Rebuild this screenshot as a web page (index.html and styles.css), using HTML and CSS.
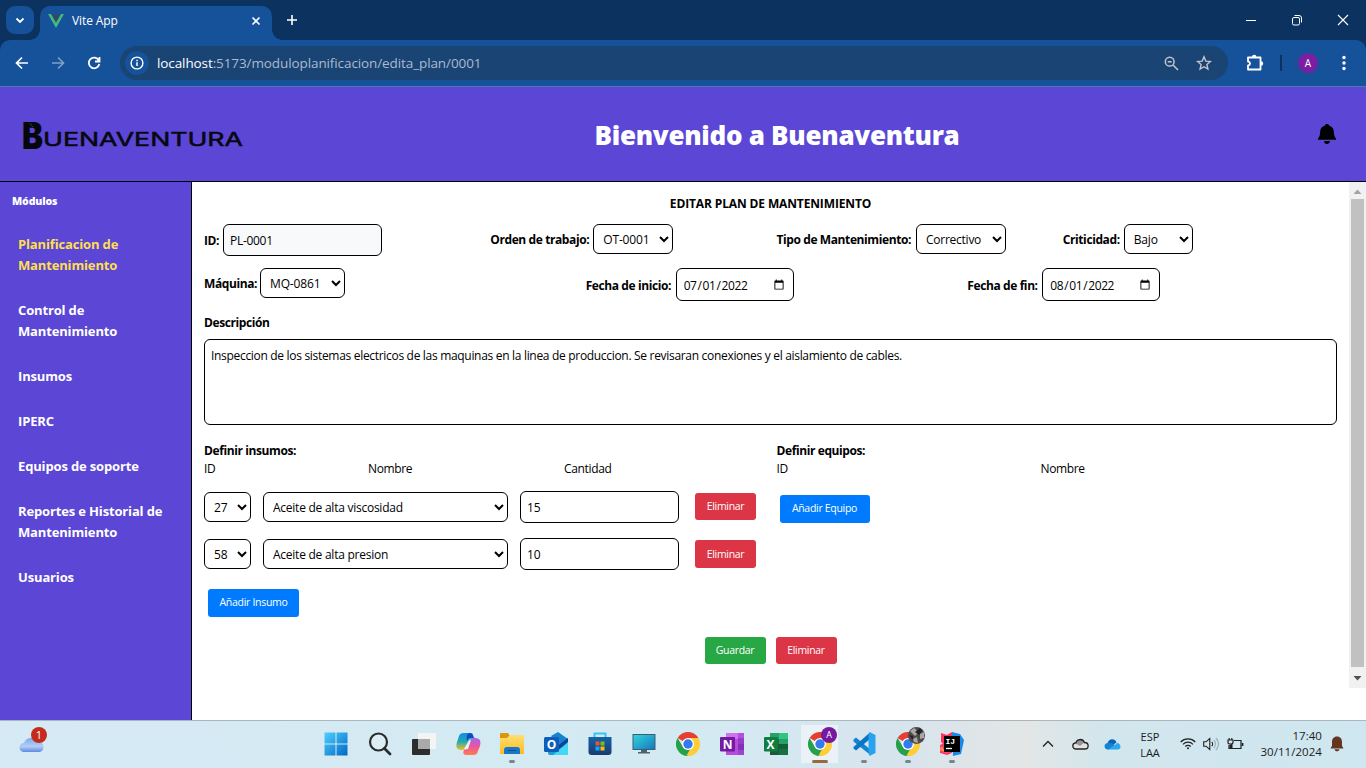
FILE: index.html
```html
<!DOCTYPE html>
<html lang="es">
<head>
<meta charset="utf-8">
<title>Vite App</title>
<link rel="stylesheet" href="styles.css">
</head>
<body>
<div class="screen">
  <div class="tabstrip">
    <div class="tab-search"><svg width="10" height="7" viewBox="0 0 10 7"><path d="M1.5 1.5 5 5l3.500-3.500" fill="none" stroke="#fff" stroke-width="1.800"/></svg></div>
    <div class="tab">
      <svg width="16" height="14" viewBox="0 0 16 14"><path d="M0 0h3.200L8 8.300 12.800 0H16L8 14z" fill="#41b883"/><path d="M3.200 0h3L8 3.200 9.800 0h3L8 8.400z" fill="#35495e"/></svg>
      <span class="tab-title">Vite App</span>
      <svg width="10" height="10" viewBox="0 0 10 10"><path d="m1.500 1.500 7 7m0-7-7 7" stroke="#fff" stroke-width="1.600"/></svg>
    </div>
    <svg class="plus" width="12" height="12" viewBox="0 0 12 12"><path d="M6 1v10M1 6h10" stroke="#fff" stroke-width="1.600"/></svg>
    <div class="window-buttons">
      <svg width="12" height="12" viewBox="0 0 12 12"><path d="M1 6.500h10" stroke="#fff"/></svg>
      <svg width="12" height="12" viewBox="0 0 12 12" fill="none" stroke="#fff"><rect x="1.500" y="3.500" width="7" height="7.500" rx="1.500"/><path d="M3.500 1.500H8a2.500 2.500 0 0 1 2.500 2.500v4.500"/></svg>
      <svg width="12" height="12" viewBox="0 0 12 12"><path d="m1 1 10 10M11 1 1 11" stroke="#fff" stroke-width="1.100"/></svg>
    </div>
  </div>
  <div class="toolbar-back"><div class="toolbar">
    <div class="nav-buttons">
      <svg width="14" height="14" viewBox="0 0 14 14" fill="none" stroke="#fff" stroke-width="1.700"><path d="M13 7H2M7 1.500 1.500 7 7 12.500"/></svg>
      <svg width="14" height="14" viewBox="0 0 14 14" fill="none" stroke="#7f9fc5" stroke-width="1.700"><path d="M1 7h11M7 1.500 12.500 7 7 12.500"/></svg>
      <svg width="14" height="14" viewBox="0 0 14 14" fill="none" stroke="#fff" stroke-width="1.800"><path d="M11.800 4.500A5.300 5.300 0 1 0 12.300 8M12.500 1v4.500H8"/></svg>
    </div>
    <div class="address">
      <div class="info"><svg width="14" height="14" viewBox="0 0 14 14"><circle cx="7" cy="7" r="5.900" fill="none" stroke="#fff" stroke-width="1.400"/><path d="M7 6.200V10M7 3.800v1.400" stroke="#fff" stroke-width="1.500"/></svg></div>
      <div class="url"><b>localhost</b>:5173/moduloplanificacion/edita_plan/0001</div>
      <svg width="15" height="15" viewBox="0 0 15 15" fill="none" stroke="#c3c5c9" stroke-width="1.500"><circle cx="5.700" cy="5.700" r="4.400"/><path d="m9 9 5 5M3.700 5.700h4"/></svg>
      <svg class="star" width="16" height="16" viewBox="0 0 16 16" fill="none" stroke="#c3c5c9" stroke-width="1.400"><path d="m8 1.800 1.800 4.300 4.600.4-3.500 3 1 4.600L8 11.700l-3.900 2.400 1-4.600-3.500-3 4.600-.4z"/></svg>
    </div>
    <svg class="ext" width="18" height="18" viewBox="0 0 18 18" fill="none" stroke="#fff" stroke-width="1.800"><path d="M2 3.500h12.500v12H2v-4a2 2 0 0 0 0-4z" stroke-linejoin="round"/><path d="M6 3a2.200 2.200 0 0 1 4.400 0zM15 7.300a2.200 2.200 0 0 1 0 4.400z" fill="#fff" stroke="none"/></svg>
    <i class="tool-sep"></i>
    <div class="avatar">A</div>
    <svg class="dots" width="4" height="16" viewBox="0 0 4 16" fill="#fff"><circle cx="2" cy="2.500" r="1.700"/><circle cx="2" cy="8" r="1.700"/><circle cx="2" cy="13.500" r="1.700"/></svg>
  </div></div>

  <header class="header">
    <svg class="brand" width="224" height="54" viewBox="0 0 224 54">
      <text class="brand-initial" x="0" y="41.500" textLength="21" lengthAdjust="spacingAndGlyphs">B</text>
      <path d="m7.500 16 3.500 4" fill="none" stroke="#2f5f66" stroke-width=".7"/>
      <text class="brand-rest" x="21" y="39" textLength="200" lengthAdjust="spacingAndGlyphs">UENAVENTURA</text>
    </svg>
    <h1>Bienvenido a Buenaventura</h1>
    <svg class="bell" width="18" height="20" viewBox="0 0 18 20"><path d="M9 0c1.200 0 1.800.6 2 1.400 3 .8 4.800 3.200 4.800 6.100 0 3.500.8 5.500 2.200 7v1.300H0v-1.300c1.400-1.500 2.200-3.500 2.200-7C2.200 4.600 4 2.200 7 1.400 7.200.6 7.800 0 9 0zM6 17h6c0 4-6 4-6 0z"/></svg>
  </header>

  <div class="body">
    <nav class="sidebar">
      <div class="side-title">Módulos</div>
      <a class="active">Planificacion de<br>Mantenimiento</a>
      <a>Control de<br>Mantenimiento</a>
      <a>Insumos</a>
      <a>IPERC</a>
      <a>Equipos de soporte</a>
      <a>Reportes e Historial de<br>Mantenimiento</a>
      <a>Usuarios</a>
    </nav>
    <main class="content">
      <h2>EDITAR PLAN DE MANTENIMIENTO</h2>
      <div class="row four">
        <div class="field"><label class="l-id">ID:</label><input class="readonly" value="PL-0001" readonly></div>
        <div class="field"><label class="l-order">Orden de trabajo:</label><select class="s-order"><option>OT-0001</option></select></div>
        <div class="field"><label class="l-type">Tipo de Mantenimiento:</label><select class="s-type"><option>Correctivo</option></select></div>
        <div class="field"><label class="l-crit">Criticidad:</label><select class="s-crit"><option>Bajo</option></select></div>
      </div>
      <div class="row three">
        <div class="field"><label class="l-machine">Máquina:</label><select class="s-machine"><option>MQ-0861</option></select></div>
        <div class="field"><label class="l-start">Fecha de inicio:</label><input type="date" value="2022-07-01"></div>
        <div class="field"><label class="l-end">Fecha de fin:</label><input type="date" value="2022-08-01"></div>
      </div>
      <label class="desc-label">Descripción</label>
      <textarea>Inspeccion de los sistemas electricos de las maquinas en la linea de produccion. Se revisaran conexiones y el aislamiento de cables.</textarea>
      <div class="halves">
        <section>
          <b class="sec-title">Definir insumos:</b>
          <div class="heads supplies"><span>ID</span><span>Nombre</span><span>Cantidad</span></div>
          <div class="item"><select class="s-num"><option>27</option></select><select class="s-name"><option>Aceite de alta viscosidad</option></select><input value="15"><button class="btn danger">Eliminar</button></div>
          <div class="item"><select class="s-num"><option>58</option></select><select class="s-name"><option>Aceite de alta presion</option></select><input value="10"><button class="btn danger tall">Eliminar</button></div>
          <button class="btn primary add-supply">Añadir Insumo</button>
        </section>
        <section>
          <b class="sec-title">Definir equipos:</b>
          <div class="heads gear"><span>ID</span><span>Nombre</span></div>
          <button class="btn primary add-gear">Añadir Equipo</button>
        </section>
      </div>
      <div class="actions"><button class="btn success">Guardar</button><button class="btn danger">Eliminar</button></div>
    </main>
    <div class="scrollbar">
      <svg width="9" height="5" viewBox="0 0 9 5"><path d="M.5 5 4.500.5l4 4.500z" fill="#a3a3a3"/></svg>
      <i class="thumb"></i>
      <svg width="9" height="5" viewBox="0 0 9 5"><path d="M.5 0h8l-4 4.500z" fill="#505050"/></svg>
    </div>
  </div>

  <footer class="taskbar">
    <div class="weather"><svg width="26" height="20" viewBox="0 0 26 20"><defs><linearGradient id="wc" x2="0" y2="1"><stop offset="0" stop-color="#7fabea"/><stop offset=".6" stop-color="#b2cdf8"/><stop offset="1" stop-color="#5b8be0"/></linearGradient></defs><path d="M5 18a4.500 4.500 0 0 1 0-9C7 3 15 2 17.500 8c4-1 7 1.500 7 4.900 0 3-2 5.100-5 5.100z" fill="url(#wc)"/></svg><span class="badge">1</span></div>
    <div class="apps">
      <div class="app"><svg width="24" height="24" viewBox="0 0 24 24"><defs><linearGradient id="win" x2="1" y2="1"><stop stop-color="#4fd0ff"/><stop offset="1" stop-color="#0067c5"/></linearGradient></defs><path d="M.5.5h11v11H.5zm12 0h11v11h-11zm-12 12h11v11H.5zm12 0h11v11h-11z" fill="url(#win)"/></svg></div>
      <div class="app"><svg width="24" height="24" viewBox="0 0 24 24" fill="none" stroke="#2b2b2b"><circle cx="10.500" cy="10" r="8.500" stroke-width="2.200" fill="#dceef3"/><path d="m16.500 16.500 5.500 5.500" stroke-width="2.800" stroke-linecap="round"/></svg></div>
      <div class="app"><svg width="26" height="24" viewBox="0 0 26 24"><rect x="7" y="1" width="18" height="16" rx="1" fill="#f4f4f4"/><rect x="1" y="7" width="18" height="16" rx="1" fill="#2d2d2c"/><path d="M7 7h12v10H7z" fill="#aaa"/></svg></div>
      <div class="app"><svg width="26" height="24" viewBox="0 0 26 24"><defs><linearGradient id="c1" x2="0" y2="1"><stop stop-color="#1689e8"/><stop offset=".5" stop-color="#20aab0"/><stop offset="1" stop-color="#f5bf22"/></linearGradient><linearGradient id="c2" x2="0" y2="1"><stop stop-color="#9b68f0"/><stop offset=".5" stop-color="#ed559b"/><stop offset="1" stop-color="#ff7c4d"/></linearGradient></defs><path d="M9 1h7c2 0 3 3 2 5l-4 2-3 7c-1 3-2 3-5 3C1 18 1 14 2 10L4 4c.8-2 2-3 5-3z" fill="url(#c1)"/><path d="M15 1c3 0 3 5 5 5h-6l-2 3c-1-4 0-8 3-8z" fill="#1648bd"/><path d="M18 23h-7c-3 0-3-3-2-5l3-1 3-8c1-3 2-3 5-3 6 0 6 4 5 8l-2 5c-.8 3-2 4-5 4z" fill="url(#c2)"/><path d="m13 10 3-2-3 9H9z" fill="#e4f4f8"/></svg></div>
      <div class="app"><svg width="26" height="24" viewBox="0 0 26 24"><defs><linearGradient id="fd" x2="0" y2="1"><stop stop-color="#ffdf70"/><stop offset="1" stop-color="#f9bd27"/></linearGradient></defs><path d="M1 2q0-1 1-1h7l2 3v5H1z" fill="#dc9606"/><path d="M1 6h7l3-3h13q1 0 1 1v18H1z" fill="url(#fd)"/><path d="M5 22v-4q0-3 3-3h10q3 0 3 3v4z" fill="#1976c6"/><path d="M9 18.500h8" stroke="#095094"/></svg><i class="run"></i></div>
      <div class="app"><svg width="26" height="24" viewBox="0 0 26 24"><path d="m5 8 10-7 10 7v13q0 2-2 2H7q-2 0-2-2z" fill="#1a9eda"/><path d="m8 4 7-4 10 7v5l-8 4z" fill="#1683d2"/><path d="m13 15 12-9v5L15 18z" fill="#0d4294"/><path d="m25 10-15 13h13q2 0 2-2z" fill="#43d8f5"/><rect x="1" y="5" width="15" height="15" rx="1.500" fill="#0d5eb9"/><text x="3.800" y="17" class="glyph">O</text></svg></div>
      <div class="app"><svg width="24" height="24" viewBox="0 0 24 24"><defs><linearGradient id="st" x2="0" y2="1"><stop stop-color="#1364aa"/><stop offset="1" stop-color="#193b70"/></linearGradient></defs><path d="M6.500 6V1.500h11V6" fill="none" stroke="#35c4f5" stroke-width="2"/><path d="M.5 5h23v15q0 3-3 3h-17q-3 0-3-3z" fill="url(#st)"/><path d="M7.500 9.500h4v4h-4z" fill="#f15229"/><path d="M12.500 9.500h4v4h-4z" fill="#81bd17"/><path d="M7.500 14.500h4v4h-4z" fill="#12a6ee"/><path d="M12.500 14.500h4v4h-4z" fill="#ffba08"/></svg></div>
      <div class="app"><svg width="26" height="24" viewBox="0 0 26 24"><defs><linearGradient id="pc" x2="1" y2="1"><stop stop-color="#32d5df"/><stop offset="1" stop-color="#1478bd"/></linearGradient></defs><rect x="2" y="2.500" width="22" height="15" fill="url(#pc)" stroke="#385e70"/><path d="M10 18h6v2h3v1.500H7V20h3z" fill="#536069"/></svg></div>
      <div class="app"><svg width="24" height="24" viewBox="0 0 24 24"><g id="chrome"><path d="M12 12 1.600 6A12 12 0 0 1 22.400 6z" fill="#e63e30"/><path d="M12 12V6h10.400A12 12 0 0 1 12 24z" fill="#ffcd35"/><path d="M12 24A12 12 0 0 1 1.600 6L7 15l5 3 5-3z" fill="#27a04b"/><path d="M17 15 12 24" stroke="#ffcd35" stroke-width="3"/><circle cx="12" cy="12" r="6" fill="#fff"/><circle cx="12" cy="12" r="4.700" fill="#337cf0"/></g></svg></div>
      <div class="app"><svg width="26" height="24" viewBox="0 0 26 24"><path d="M7 1h18v22H7z" fill="#b64ce0"/><path d="M7 1h12v6H7z" fill="#cf72ee"/><path d="M19 6h6v6h-6z" fill="#983bc9"/><path d="M19 12h6v6h-6z" fill="#8431b5"/><path d="M19 18h6v5h-6z" fill="#9d45cf"/><rect x="1" y="5" width="15" height="14.500" rx="1" fill="#7519a3"/><text x="3.700" y="16.500" class="glyph">N</text></svg></div>
      <div class="app"><svg width="26" height="24" viewBox="0 0 26 24"><path d="M7 1h9v6H7z" fill="#25a366"/><path d="M16 1h9v6h-9z" fill="#33c481"/><path d="M7 7h9v5H7zM16 17h9v6h-9z" fill="#147245"/><path d="M16 7h9v5h-9z" fill="#21a366"/><path d="M16 12h9v5h-9zM7 12h9v11H7z" fill="#185c38"/><rect x="1" y="5" width="14" height="14.500" rx="1" fill="#107c41"/><text x="3.600" y="16.500" class="glyph">X</text></svg></div>
      <div class="app current"><svg width="24" height="24" viewBox="0 0 24 24"><use href="#chrome"/></svg><span class="app-avatar">A</span><i class="run on"></i></div>
      <div class="app"><svg width="24" height="24" viewBox="0 0 24 24"><path d="m1.500 7.500 2.500-2L19 18v5.500L1.500 9.500z" fill="#1484d0"/><path d="M1.500 15 18 .5V7L4 18.500l-2.500-2z" fill="#0875c5"/><path d="m17.500 0 6 3v18l-6 3-1-4V4z" fill="#29a3ed"/></svg><i class="run"></i></div>
      <div class="app"><svg width="24" height="24" viewBox="0 0 24 24"><use href="#chrome"/></svg><span class="app-photo"><svg width="17" height="17" viewBox="0 0 17 17"><circle cx="8.500" cy="8.500" r="8.500" fill="#4c4b4b"/><path d="m2 4 4-3 5 4-4 4zM12 7l4-2v6l-4 1zM5 12l4-2 1 6-4-1z" fill="#a9a6a3"/><path d="m7 5 5-4 2 3-3 4zM1 8l4 1v4z" fill="#222"/></svg></span><i class="run"></i></div>
      <div class="app"><svg width="26" height="26" viewBox="0 0 26 26"><path d="m2 2 6 2 5-3 3 5-5 12-9-7z" fill="#ff335d"/><path d="m13 1 8 2 4 6-3 14-8 2z" fill="#168bed"/><path d="m1 14 8-4 4 12-5 2-7-2z" fill="#fc386d"/><path d="m2 15-1 4 7 3z" fill="#fc9536"/><path d="M5 5h16v16H5z"/><text x="6.500" y="13" class="ij">IJ</text><path d="M7 17.500h6" stroke="#fff" stroke-width="1.300"/></svg><i class="run"></i></div>
    </div>
    <div class="tray">
      <svg class="t-chev" width="12" height="8" viewBox="0 0 12 8"><path d="m1 6.500 5-5 5 5" fill="none" stroke="#222" stroke-width="1.300"/></svg>
      <svg class="t-cloud" width="17" height="12" viewBox="0 0 17 12"><path d="M4 11a3 3 0 0 1-.2-6.200C5 1 10.500 0 12.500 4.500 17.500 4.500 17 11 13 11z" fill="#e2e2e0"/><path d="M3.500 5.500C5 1 10.500 0 12.500 4.500L8 8z" fill="#969696"/><path d="M4 11a3 3 0 0 1-.2-6.200C5 1 10.500 0 12.500 4.500 17.500 4.500 17 11 13 11z" fill="none" stroke="#222" stroke-width="1.300"/></svg>
      <svg class="t-drive" width="17" height="12" viewBox="0 0 17 12"><path d="M3.500 5C5 0 11 0 12.500 4.500L6 9z" fill="#0b62b5"/><path d="M3.700 11.500C-.5 11.500-.5 5 4 5c3-1 5 1 7 2l-6 4.500z" fill="#1482d5"/><path d="M4 11.500 11 7l2-2c4 0 5 6.500.7 6.500z" fill="#29a8ec"/></svg>
      <div class="lang">ESP<br>LAA</div>
      <svg class="t-wifi" width="16" height="13" viewBox="0 0 16 13" fill="none" stroke="#222" stroke-width="1.200"><path d="M.7 5a10.300 10.300 0 0 1 14.600 0M3 7.300a7 7 0 0 1 10 0M5.300 9.500a3.800 3.800 0 0 1 5.400 0"/><circle cx="8" cy="11.300" r="1" fill="#222" stroke="none"/></svg>
      <svg class="t-vol" width="16" height="14" viewBox="0 0 16 14" fill="none" stroke="#222" stroke-width="1.100"><path d="M.7 4.800H3L6.800 1.500v11L3 9.200H.7zM8.700 4.800a3 3 0 0 1 0 4.400"/><path d="M10.800 3a5.500 5.500 0 0 1 0 8M12.800 1a8 8 0 0 1 0 12" stroke="#9caeb3"/></svg>
      <svg class="t-bat" width="17" height="14" viewBox="0 0 17 14" fill="none" stroke="#222" stroke-width="1.200"><path d="M7 3.500h7v8H2V8"/><path d="M15.500 6v3" stroke-width="1.800"/><path d="M1 3h5v2.500q0 1.500-2.500 1.500T1 5.500zM2.200 3V1M4.800 3V1"/><path d="M2.500 11V8l3-1.500V11z" fill="#222" stroke="none"/></svg>
      <div class="clock">17:40<br>30/11/2024</div>
      <svg class="t-bell" width="14" height="16" viewBox="0 0 14 16"><path d="M7 .5c3.200 0 5 2.300 5 5.300v4l1.500 2.700H.5L2 9.800v-4C2 2.800 3.800.5 7 .5zM4.500 13.200h5c-.4 2.700-4.600 2.700-5 0z" fill="#633620"/></svg>
    </div>
  </footer>
</div>
</body>
</html>
```
FILE: styles.css
```css
* { box-sizing: border-box; }
body { margin: 0; font-family: "Open Sans", "Noto Sans", sans-serif; font-size: 12px; color: #000; }
svg { display: block; flex: none; }
.screen { width: 1366px; height: 768px; display: flex; flex-direction: column; overflow: hidden; background: #fff; }

.tabstrip { height: 40px; flex: none; background: #0c335f; display: flex; align-items: center; padding-left: 6px; }
.tab-search { width: 28px; height: 28px; border-radius: 9px; background: #155299; display: flex; align-items: center; justify-content: center; }
.tab { position: relative; width: 232px; height: 34px; margin: 6px 0 0 6px; border-radius: 10px 10px 0 0; background: #155299; display: flex; align-items: center; padding: 0 11px 5px 8px; }
.tab::before, .tab::after { content: ""; position: absolute; bottom: 0; width: 10px; height: 10px; }
.tab::before { left: -10px; background: radial-gradient(circle at 0 0, transparent 9.500px, #155299 10px); }
.tab::after { right: -10px; background: radial-gradient(circle at 100% 0, transparent 9.500px, #155299 10px); }
.tab-title { flex: 1; padding-left: 8px; color: #fff; font-size: 12px; line-height: 16px; letter-spacing: -.1px; }
.plus { margin-left: 14px; }
.window-buttons { margin-left: auto; display: flex; gap: 34px; padding-right: 17px; }

.toolbar-back { height: 47px; flex: none; background: #0c335f; }
.toolbar { height: 47px; background: #155299; border-bottom: 1px solid #4d78b5; border-radius: 10px 10px 0 0; display: flex; align-items: center; padding-left: 15px; }
.nav-buttons { display: flex; gap: 22px; width: 105px; }
.address { width: 1108px; height: 34px; border-radius: 17px; background: #194473; display: flex; align-items: center; padding: 0 16px 0 5px; }
.info { width: 24px; height: 24px; border-radius: 12px; background: #155299; display: flex; align-items: center; justify-content: center; }
.url { flex: 1; padding-left: 8px; color: #a9bbd0; font-size: 13.500px; letter-spacing: -.1px; white-space: nowrap; }
.url b { color: #fff; font-weight: 400; }
.star { margin-left: 17px; }
.ext { margin-left: 18px; }
.tool-sep { width: 2px; height: 16px; background: #0c335f; margin-left: 16px; }
.avatar { width: 20px; height: 20px; margin-left: 16px; border-radius: 10px; background: #7b1fa2; color: #fff; font-size: 10px; line-height: 20px; text-align: center; }
.dots { margin-left: 24px; }

.header { height: 95px; flex: none; background: #5b46d6; border-bottom: 1px solid #000; display: flex; align-items: center; padding: 0 30px 0 22px; }
.brand-initial { font: 900 37px Inter, sans-serif; fill: #05070c; }
.brand-rest { font: 400 18.500px Inter, sans-serif; fill: #08080f; stroke: #08080f; stroke-width: .5px; }
.header h1 { margin: 2px 0 0; flex: 1; text-align: center; padding-right: 10px; color: #fff; font-size: 26px; font-weight: 800; line-height: 36px; letter-spacing: -.28px; white-space: nowrap; }

.body { height: 538px; flex: none; display: flex; }
.sidebar { width: 192px; flex: none; background: #5b46d6; border-right: 1px solid #000; color: #fff; padding: 12px 0 0 12px; font-weight: 700; }
.side-title { font-size: 10.500px; font-weight: 800; line-height: 15px; margin-bottom: 25px; letter-spacing: -.1px; }
.sidebar a { display: block; padding-left: 6px; margin-bottom: 24px; font-size: 13px; line-height: 21px; white-space: nowrap; letter-spacing: -.15px; }
.sidebar .active { color: #ffdf4f; }

.content { flex: 1; min-width: 0; padding-left: 12px; }
.content h2 { margin: 14px 0 13px; padding-right: 12px; text-align: center; font-size: 12px; line-height: 15px; font-weight: 700; letter-spacing: -.13px; }
.row { display: grid; height: 44px; }
.four { grid-template-columns: repeat(4, 1fr); }
.three { grid-template-columns: repeat(3, 1fr); }
.field { display: flex; align-items: flex-start; }
label, .sec-title { font-weight: 700; white-space: nowrap; letter-spacing: -.4px; }
label { flex: none; line-height: 31px; }
.l-id { width: 19px; line-height: 33px; }
.l-order { width: 103px; }
.l-type { width: 139.500px; }
.l-crit { width: 61px; }
.l-machine { width: 56px; }
.l-start { width: 90px; line-height: 35px; }
.l-end { width: 75px; line-height: 35px; }
input, select, textarea { font: 12px "Open Sans", "Noto Sans", sans-serif; color: #000; background: #fff; border: 1px solid #000; border-radius: 6px; margin: 0; letter-spacing: -.15px; }
input { width: 159px; height: 32px; padding: 0 6px; }
.readonly { background: #f8f9fb; letter-spacing: -.3px; }
input[type="date"] { width: 118px; height: 33px; letter-spacing: -.4px; padding-top: 1px; }
select { height: 30px; padding: 0 4px 0 5px; }
.s-order { width: 80px; }
.s-type { width: 90px; letter-spacing: -.25px; }
.s-crit { width: 69px; }
.s-machine { width: 85px; }
.s-num { width: 47px; }
.s-name { width: 245px; margin: 0 12px; letter-spacing: -.25px; }
.desc-label { display: block; line-height: 16px; margin: 3px 0 8px; }
textarea { display: block; width: 1133px; height: 86px; padding: 8px 6px; line-height: 16px; resize: none; letter-spacing: -.31px; }
.halves { display: grid; grid-template-columns: 1fr 1fr; height: 212px; padding-top: 17px; }
.sec-title { display: block; line-height: 18px; }
.heads { display: grid; line-height: 18px; height: 31px; letter-spacing: -.35px; }
.supplies { grid-template-columns: 164px 196px 1fr; }
.gear { grid-template-columns: 264px 1fr; height: 35px; }
.item { display: flex; align-items: center; height: 32px; margin-bottom: 15px; }
.item .btn { margin-left: 16px; margin-top: -1px; }
.item .tall { height: 28px; margin-top: 0; }
.btn { font: 10.500px "Open Sans", "Noto Sans", sans-serif; color: #fff; border: 0; border-radius: 3px; width: 61px; height: 27px; padding: 0 0 1px; letter-spacing: -.3px; white-space: nowrap; }
.primary { background: #007bff; width: 91px; height: 28px; padding-bottom: 2px; }
.danger { background: #dc3545; }
.success { background: #28a745; }
.add-supply { margin: 4px 0 0 4px; }
.add-gear { width: 90px; margin: 0 0 0 3px; }
.actions { display: flex; justify-content: center; gap: 10px; padding-right: 12px; }

.scrollbar { width: 17px; height: 506px; flex: none; background: #f1f1f1; display: flex; flex-direction: column; align-items: center; padding: 7px 0; }
.thumb { width: 13px; height: 469px; margin: 5px 0 9px; background: #c1c1c1; }

.taskbar { position: relative; height: 48px; flex: none; display: flex; border-top: 1px solid #abb7bf; background: linear-gradient(90deg, #d5eaf4 0%, #d4eaf2 52%, #d7e4ee 66%, #e3e6e5 75%, #d2e6ed 81%, #cfe7f0 100%); color: #1c1c1c; }
.weather { position: relative; width: 314px; padding: 13px 0 0 19px; }
.badge { position: absolute; left: 31px; top: 6px; width: 16px; height: 16px; border-radius: 8px; background: #c42b1c; color: #fff; font-size: 11px; line-height: 16px; text-align: center; }
.apps { display: flex; }
.app { position: relative; width: 44px; height: 47px; display: flex; align-items: center; justify-content: center; padding-bottom: 2px; }
.current { background: linear-gradient(#eaf2f7, #eaf2f7) 3px 4px / 37px 38px no-repeat; }
.run { position: absolute; left: 19px; bottom: 5px; width: 6px; height: 3px; border-radius: 2px; background: #7a858a; }
.on { left: 14px; width: 16px; background: #99693c; }
.app-avatar, .app-photo { position: absolute; left: 23px; top: 6px; width: 16px; height: 16px; border-radius: 50%; }
.app-avatar { background: #7719a0; color: #fff; font-size: 9px; line-height: 16px; text-align: center; }
.app-photo { left: 22px; }
.glyph { font: 700 12px "Open Sans", sans-serif; fill: #fff; }
.ij { font: 700 8px "Liberation Mono", monospace; fill: #fff; }
.tray { display: flex; align-items: center; padding: 0 0 2px 68px; font-size: 11px; line-height: 16px; }
.t-cloud { margin-left: 18px; }
.t-drive { margin-left: 15px; }
.lang { width: 24px; margin-left: 17px; text-align: center; padding-top: 2px; }
.t-wifi { margin-left: 18px; }
.t-vol { margin-left: 7px; }
.t-bat { margin-left: 8px; }
.clock { width: 70px; margin-left: 8px; text-align: right; white-space: nowrap; font-size: 11.500px; letter-spacing: .05px; }
.t-bell { margin-left: 8px; }
```
